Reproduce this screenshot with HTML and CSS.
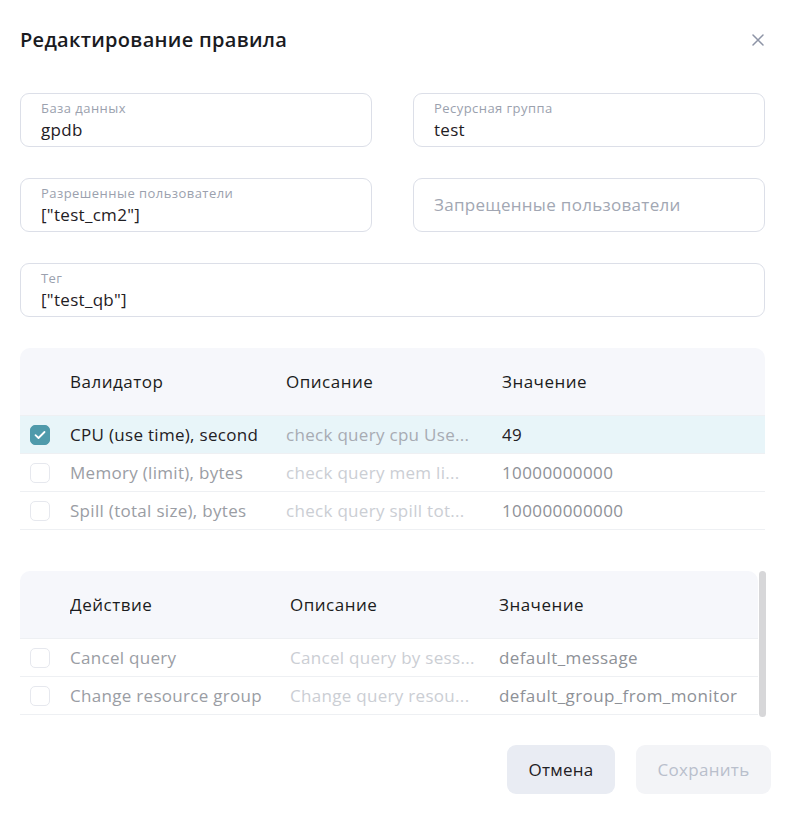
FILE: index.html
```html
<!DOCTYPE html>
<html lang="ru">
<head>
<meta charset="utf-8">
<link rel="stylesheet" href="styles.css">
</head>
<body>
<div class="modal">
  <div class="head">
    <h1 class="title">Редактирование правила</h1>
    <button class="close" aria-label="close">
      <svg width="12" height="12" viewBox="0 0 12 12"><path d="M1 1L11 11M11 1L1 11" stroke="#8d94a6" stroke-width="1.5" stroke-linecap="round"/></svg>
    </button>
  </div>

  <div class="form">
    <div class="field"><span class="label">База данных</span><span class="value">gpdb</span></div>
    <div class="field"><span class="label">Ресурсная группа</span><span class="value">test</span></div>
    <div class="field"><span class="label">Разрешенные пользователи</span><span class="value">["test_cm2"]</span></div>
    <div class="field empty"><span class="placeholder">Запрещенные пользователи</span></div>
    <div class="field wide"><span class="label">Тег</span><span class="value">["test_qb"]</span></div>
  </div>

  <div class="table t1">
    <div class="row hdr">
      <span></span><span>Валидатор</span><span>Описание</span><span>Значение</span>
    </div>
    <div class="row sel">
      <span class="cb on"><svg width="12" height="10" viewBox="0 0 12 10"><path d="M1.5 5.2L4.5 8L10.5 2" fill="none" stroke="#fff" stroke-width="1.8" stroke-linecap="round" stroke-linejoin="round"/></svg></span>
      <span class="c1">CPU (use time), second</span><span class="c2">check query cpu Use...</span><span class="c3">49</span>
    </div>
    <div class="row dis">
      <span class="cb"></span>
      <span class="c1">Memory (limit), bytes</span><span class="c2">check query mem li...</span><span class="c3">10000000000</span>
    </div>
    <div class="row dis">
      <span class="cb"></span>
      <span class="c1">Spill (total size), bytes</span><span class="c2">check query spill tot...</span><span class="c3">100000000000</span>
    </div>
  </div>

  <div class="scrollwrap">
    <div class="table t2">
      <div class="row hdr">
        <span></span><span>Действие</span><span>Описание</span><span>Значение</span>
      </div>
      <div class="row dis">
        <span class="cb"></span>
        <span class="c1">Cancel query</span><span class="c2">Cancel query by sess...</span><span class="c3">default_message</span>
      </div>
      <div class="row dis">
        <span class="cb"></span>
        <span class="c1">Change resource group</span><span class="c2">Change query resou...</span><span class="c3">default_group_from_monitor</span>
      </div>
    </div>
    <div class="scrollbar"></div>
  </div>

  <div class="footer">
    <button class="btn cancel">Отмена</button>
    <button class="btn save" disabled>Сохранить</button>
  </div>
</div>
</body>
</html>
```

FILE: styles.css
```css
* { box-sizing: border-box; }
body {
  margin: 0;
  background: #fff;
  font-family: "Open Sans", "Liberation Sans", sans-serif;
  color: #1f2024;
}
.modal {
  width: 789px;
  padding: 25px 24px 20px 20px;
}
.head {
  display: flex;
  justify-content: space-between;
  align-items: center;
  height: 30px;
}
.title {
  margin: 0;
  font-size: 20px;
  line-height: 30px;
  font-weight: 600;
  letter-spacing: 0.3px;
  color: #1a1b1f;
}
.close {
  border: 0;
  background: none;
  padding: 0;
  margin-right: 1px;
  display: flex;
}
.form {
  margin-top: 38px;
  display: grid;
  grid-template-columns: 1fr 1fr;
  column-gap: 41px;
  row-gap: 31px;
}
.field {
  height: 54px;
  border: 1px solid #dcdfe8;
  border-radius: 9px;
  padding: 5px 20px 0;
  display: flex;
  flex-direction: column;
}
.field.wide { grid-column: 1 / 3; }
.field.empty { justify-content: center; padding-top: 0; }
.label {
  font-size: 13px;
  line-height: 18px;
  letter-spacing: 0.45px;
  color: #9ba1ae;
}
.value {
  margin-top: 1px;
  font-size: 17px;
  line-height: 24px;
  letter-spacing: 0.3px;
  color: #1f2024;
}
.placeholder {
  font-size: 17px;
  line-height: 24px;
  letter-spacing: 0.3px;
  color: #a2a7b3;
}
.table { font-size: 17px; letter-spacing: 0.3px; }
.t1 { margin-top: 31px; }
.row {
  display: grid;
  align-items: center;
  height: 38px;
  border-bottom: 1px solid #eef0f3;
}
.t1 .row { grid-template-columns: 50px 216px 216px 1fr; }
.t2 .row { grid-template-columns: 50px 220px 209px 1fr; }
.row.hdr {
  height: 68px;
  background: #f6f7fb;
  border-radius: 10px 10px 0 0;
  font-weight: 500;
  letter-spacing: 0.5px;
  color: #1b1c20;
}
.row > span { white-space: nowrap; overflow: hidden; }
.row.sel { background: #e8f5f9; }
.row.sel .c1, .row.sel .c3 { color: #1f2024; }
.row.sel .c2 { color: #a7abb3; }
.row.dis .c1 { color: #9a9da4; }
.row.dis .c2 { color: #cbced4; }
.row.dis .c3 { color: #8e9197; }
.row:not(.hdr) .c3 { letter-spacing: 0.4px; }
.cb {
  width: 20px;
  height: 20px;
  margin-left: 10px;
  border: 1px solid #e6e8ee;
  border-radius: 5px;
  background: #fff;
  display: flex;
  align-items: center;
  justify-content: center;
}
.cb.on {
  background: #4f9aab;
  border-color: #4f9aab;
}
.scrollwrap {
  margin-top: 41px;
  display: flex;
  gap: 1px;
  margin-right: -1px;
}
.t2 { flex: 1; }
.scrollbar {
  width: 7px;
  height: 146px;
  background: #d7d7d9;
  border-radius: 4px;
}
.footer {
  margin-top: 28px;
  display: flex;
  justify-content: flex-end;
  gap: 21px;
  margin-right: -6px;
}
.btn {
  height: 49px;
  border: 0;
  border-radius: 9px;
  font-family: inherit;
  font-size: 17px;
  font-weight: 500;
  letter-spacing: 0.3px;
  padding: 0 10px;
}
.cancel {
  width: 108px;
  background: #e9ecf3;
  color: #1f2024;
}
.save {
  width: 135px;
  background: #f3f4f7;
  color: #b9bfcc;
}
```
